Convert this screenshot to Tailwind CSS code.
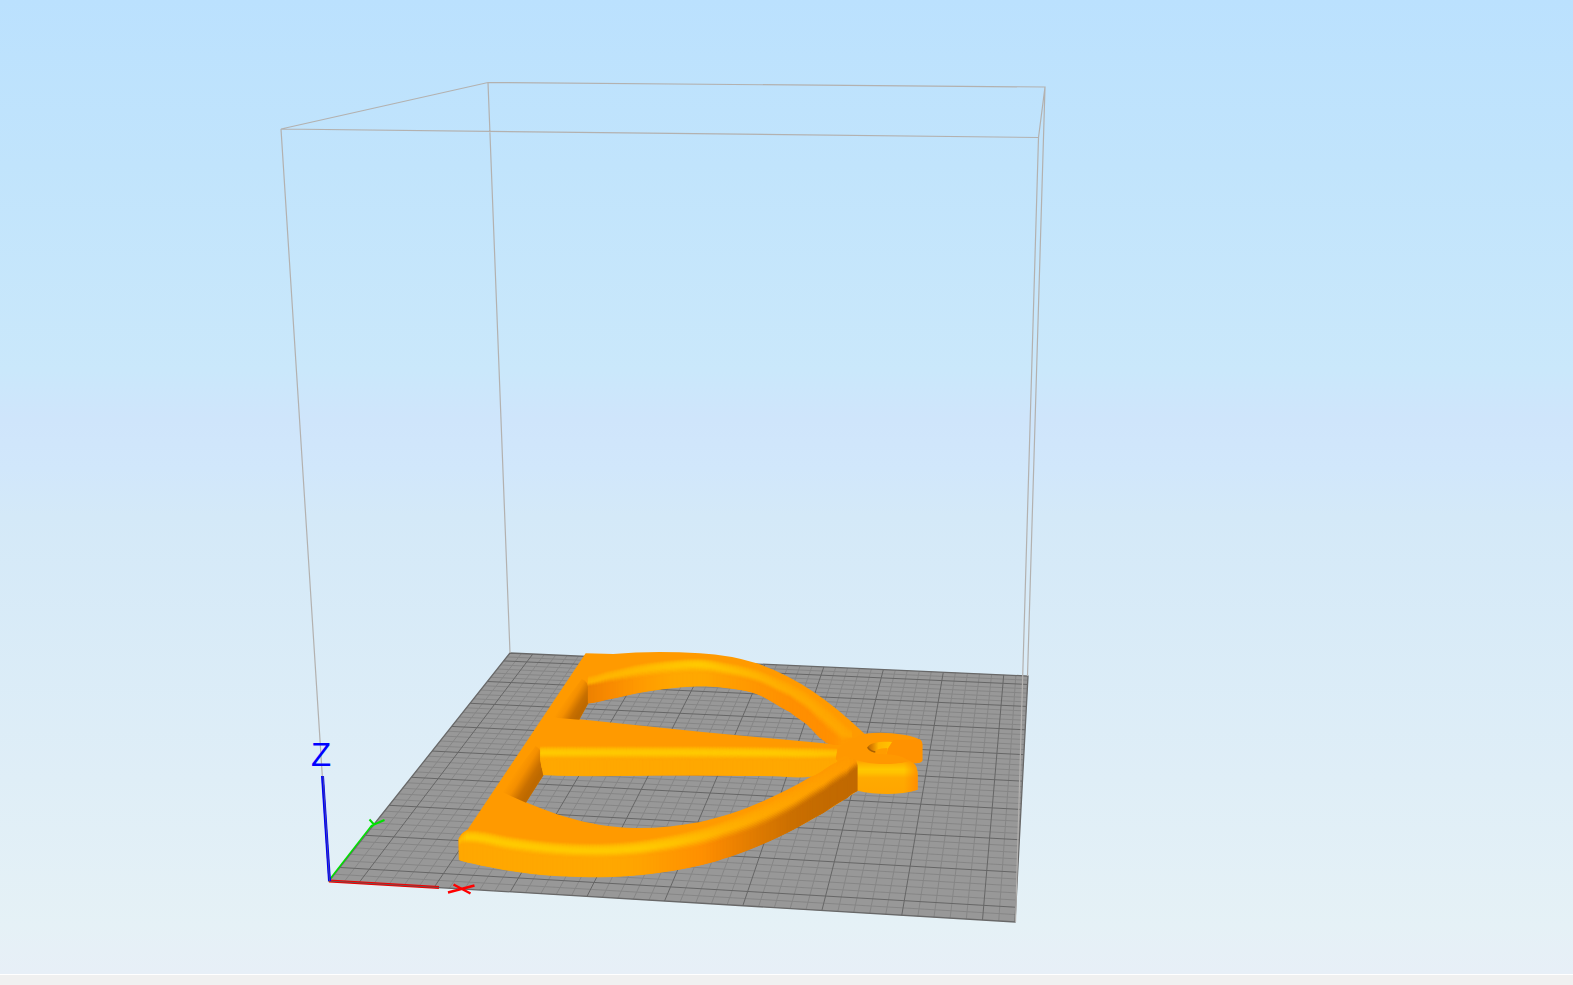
<!DOCTYPE html>
<html lang="en">
<head>
<meta charset="utf-8">
<meta name="viewport" content="width=device-width, initial-scale=1">
<title>Print bed preview</title>
<script src="https://cdn.jsdelivr.net/npm/@tailwindcss/browser@4"></script>
</head>
<body class="flex h-screen flex-col overflow-hidden bg-[#f0f0f0]">
<main class="min-h-0 flex-1 bg-[linear-gradient(to_bottom,#bbe1fe_0%,#c1e4fc_17%,#cae8fb_38%,#cfe5fb_43%,#d1e7fb_48%,#d4e9f8_53%,#dfeef7_80%,#e5f1f6_95%,#e7eff7_100%)]">
<svg class="block h-full w-full" viewBox="0 0 1573 974" role="img" aria-label="3D model on a print bed">
  <defs>
    <linearGradient id="wallA" gradientUnits="userSpaceOnUse" x1="383" y1="165" x2="432" y2="196">
      <stop offset="0" stop-color="#ff9a00"/><stop offset=".35" stop-color="#f48f00"/><stop offset=".75" stop-color="#c97000"/><stop offset="1" stop-color="#bd6900"/>
    </linearGradient>
    <linearGradient id="wallB" gradientUnits="userSpaceOnUse" x1="232" y1="385" x2="288" y2="420">
      <stop offset="0" stop-color="#ff9a00"/><stop offset=".35" stop-color="#f48f00"/><stop offset=".75" stop-color="#c97000"/><stop offset="1" stop-color="#bd6900"/>
    </linearGradient>
    <linearGradient id="jaw" gradientUnits="userSpaceOnUse" x1="0" y1="362" x2="0" y2="462">
      <stop offset="0" stop-color="#ffa000"/><stop offset=".12" stop-color="#ffb600"/><stop offset=".26" stop-color="#ffc800"/><stop offset=".36" stop-color="#ffc200"/><stop offset=".52" stop-color="#ffaa00"/><stop offset="1" stop-color="#ffa500"/>
    </linearGradient>
    <linearGradient id="jawShade" x1="0" y1="0" x2="1" y2="0">
      <stop offset=".78" stop-color="#ff8800" stop-opacity="0"/><stop offset="1" stop-color="#ff8800" stop-opacity=".8"/>
    </linearGradient>
    <linearGradient id="bore" x1="0" y1="0" x2="1" y2="0">
      <stop offset="0" stop-color="#b86800"/><stop offset=".2" stop-color="#dd8200"/><stop offset=".45" stop-color="#ffb400"/><stop offset="1" stop-color="#ffc400"/>
    </linearGradient>
  </defs>

  <!-- bed -->
  <path d="M329 881L1015 922L1028 676L510 653Z" fill="#989898"/>
  <g id="minor" stroke="#868686" stroke-width="1" fill="none"></g>
  <g id="major" stroke="#666666" stroke-width="1" fill="none"></g>
  <path d="M329 881L1015 922L1028 676L510 653Z" fill="none" stroke="#686868" stroke-width="1.3"/>

  <!-- build volume -->
  <path d="M281 129L488 82.500L1045 87L1038.500 137.500ZM488 82.500L510 653M1045 87L1027.500 676M281 129L329 881M1038.500 137.500L1015.500 922" fill="none" stroke="#b3b1af" stroke-width="1.200"/>

  <!-- axes -->
  <path d="M329 881L439 887.500" stroke="#f00000" stroke-width="3"/>
  <path d="M329 881L439 887.500" stroke="#705050" stroke-width="1"/>
  <path d="M330 879L372 825" stroke="#00e000" stroke-width="1.500"/>
  <path d="M369.500 819.500L374 824.500L384.500 820M374 824.500L371 827" stroke="#00e000" stroke-width="2" fill="none"/>
  <path d="M448 892.500L474.500 885.500M453.500 884.500L470.500 893.500" stroke="#f00" stroke-width="2.500"/>
  <path d="M322.500 776L329.500 881" stroke="#0000f5" stroke-width="3"/>
  <path d="M323 776L329.500 881" stroke="#4040b0" stroke-width="1"/>
  <text x="311" y="766" font-family="Liberation Sans, sans-serif" font-size="33" fill="#0000ff">Z</text>

  <!-- model -->
  <g transform="translate(440 640) scale(.333333)">
    <path fill="#ff9a00" fill-rule="evenodd" d="M437 40L520 42Q640 31 780 40Q870 45 950 70Q1110 122 1275 283L1290 350L1253 452C1080 570 940 632 780 675C520 735 260 710 57 660L55 600Q60 582 80 573Z
      M445 190L418 238L780 275L1175 312L1150 300C1080 220 1020 185 950 160C820 125 650 130 445 190Z
      M311 405L1115 409C1010 470 900 520 780 546C600 580 450 570 258 487Z"/>
    <path fill="url(#wallA)" d="M425 117Q445 123 445 150V190L418 239L355 234L340 230Z"/>
    <path fill="url(#wallB)" d="M287 318Q306 330 309 352L311 405L258 488L195 460L180 455Z"/>
    <g id="strips"></g>
    <!-- hinge head -->
    <path fill="url(#jaw)" d="M1247 355L1412 360Q1433 375 1433 405V449C1380 466 1310 465 1253 452V375Z"/>
    <path fill="url(#jawShade)" d="M1247 355L1412 360Q1433 375 1433 405V449C1380 466 1310 465 1253 452V375Z"/>
    <path fill="#ff9800" d="M1188 360Q1184 325 1225 304Q1245 290 1275 281Q1330 274 1390 284Q1447 293 1447 312V362Q1440 370 1425 370L1410 362C1370 376 1290 376 1243 358L1215 347Z"/>
    <path fill="#ff9200" d="M1340 327L1361 300L1440 298Q1447 304 1447 312V362Q1440 370 1425 370L1400 358Q1380 345 1340 343Z"/>
    <path fill="url(#bore)" d="M1282 322C1290 308 1320 304 1356 306L1343 327L1340 342C1315 343 1285 338 1282 322Z"/>
    <path fill="#ff9c00" d="M1303 340Q1303 325 1342 324L1340 344Z"/>
    <path fill="none" stroke="#a96000" stroke-width="4" d="M1283 322Q1290 333 1306 336"/>
  </g>
</svg>
</main>
<footer class="h-[11px] shrink-0 border-t border-white bg-[#f0f0f0]"></footer>
<script>
const NS = 'http://www.w3.org/2000/svg';
function add(id, tag, attrs) {
  const e = document.createElementNS(NS, tag);
  for (const k in attrs) e.setAttribute(k, attrs[k]);
  document.getElementById(id).appendChild(e);
}

// Projective map from the unit square to the four bed corners
const [p0, p1, p2, p3] = [[329, 881], [1015, 922], [1028, 676], [510, 653]];
const sx = p0[0] - p1[0] + p2[0] - p3[0], sy = p0[1] - p1[1] + p2[1] - p3[1];
const ax = p1[0] - p2[0], ay = p1[1] - p2[1], bx = p3[0] - p2[0], by = p3[1] - p2[1];
const det = ax * by - bx * ay, g = (sx * by - bx * sy) / det, h = (ax * sy - sx * ay) / det;
function bed(u, v) {
  const w = g * u + h * v + 1;
  return [
    ((p1[0] - p0[0] + g * p1[0]) * u + (p3[0] - p0[0] + h * p3[0]) * v + p0[0]) / w,
    ((p1[1] - p0[1] + g * p1[1]) * u + (p3[1] - p0[1] + h * p3[1]) * v + p0[1]) / w
  ];
}
// 220 mm bed, 5 mm cells, heavy line every 25 mm
for (let i = 1; i < 44; i++) {
  const t = i / 44, layer = i % 5 === 2 ? 'major' : 'minor';
  add(layer, 'path', { d: 'M' + bed(t, 0) + 'L' + bed(t, 1) });
  add(layer, 'path', { d: 'M' + bed(0, t) + 'L' + bed(1, t) });
}

// Rounded strips. Station: x, bevel top, highlight, bevel foot, base, highlight colour, wall colour
const TOP = [255, 154, 0];
const mix = (a, b, t) => a.map((v, i) => v + (b[i] - v) * t);
const ease = t => t * t * (3 - 2 * t);
const spline = (a, b, c, d, t) => .5 * (2 * b + (c - a) * t + (2 * a - 5 * b + 4 * c - d) * t * t + (3 * b - a - 3 * c + d) * t * t * t);
function strip(s) {
  const stations = [];
  for (let i = 0; i < s.length - 1; i++) {
    const a = s[Math.max(i - 1, 0)], b = s[i], c = s[i + 1], d = s[Math.min(i + 2, s.length - 1)];
    const n = Math.max(2, Math.round((c[0] - b[0]) / 10));
    for (let k = 0; k < n + (i === s.length - 2 ? 1 : 0); k++) {
      const t = k / n;
      const y = [1, 2, 3, 4].map(j => spline(a[j], b[j], c[j], d[j], t));
      stations.push({ x: b[0] + (c[0] - b[0]) * t, y, hi: mix(b[5], c[5], t), wall: mix(b[6], c[6], t) });
    }
  }
  for (let i = 0; i < stations.length - 1; i++) {
    const p = stations[i], q = stations[i + 1];
    for (let band = 0; band < 3; band++) {
      const n = band === 2 ? 1 : 7;
      for (let k = 0; k < n; k++) {
        const t0 = k / n, t1 = (k + 1) / n;
        const at = (o, t) => (o.y[band] + (o.y[band + 1] - o.y[band]) * t).toFixed(1);
        const m = (t0 + t1) / 2;
        const col = band === 0 ? mix(TOP, p.hi, 1 - (1 - m) ** 2) : band === 1 ? mix(p.hi, p.wall, ease(m)) : p.wall;
        const c = 'rgb(' + col.map(Math.round) + ')';
        add('strips', 'path', {
          d: `M${p.x} ${at(p, t0)}L${q.x} ${at(q, t0)}L${q.x} ${at(q, t1)}L${p.x} ${at(p, t1)}Z`,
          fill: c, stroke: c, 'stroke-width': 3, 'stroke-linejoin': 'round'
        });
      }
    }
  }
}
const Y = [255, 202, 0], W = [255, 168, 0];
// far arm
strip([
  [445, 108, 128, 142, 189, [255, 178, 0], [238, 130, 0]],
  [500, 94, 112, 133, 178, [255, 182, 0], [248, 138, 0]],
  [600, 72, 92, 118, 157, [255, 188, 0], [255, 155, 0]],
  [700, 60, 79, 105, 143, [255, 197, 0], W],
  [780, 56, 76, 100, 138, Y, W],
  [850, 66, 88, 110, 142, [255, 193, 0], [255, 160, 0]],
  [950, 88, 112, 132, 161, [255, 180, 0], [255, 150, 0]],
  [1050, 127, 157, 178, 215, [255, 172, 0], [255, 144, 0]],
  [1100, 155, 189, 215, 252, [255, 170, 0], [255, 143, 0]],
  [1150, 192, 230, 262, 300, [255, 168, 0], [255, 143, 0]],
  [1175, 213, 252, 285, 312, [255, 168, 0], [255, 145, 0]],
  [1205, 242, 278, 305, 312, [255, 168, 0], [255, 154, 0]],
  [1235, 268, 290, 298, 302, [255, 164, 0], [255, 154, 0]]
]);
// centre bar
strip([
  [302, 319, 340, 360, 362, Y, W],
  [311, 319, 340, 360, 404, Y, W],
  [780, 319, 340, 361, 404, Y, W],
  [1000, 321, 341, 362, 407, Y, W],
  [1115, 323, 343, 362, 408, [255, 198, 0], W],
  [1190, 326, 342, 360, 366, [255, 192, 0], W]
]);
// near arm
strip([
  [58, 594, 604, 620, 659, [255, 185, 0], W],
  [66, 582, 598, 616, 662, [255, 190, 0], W],
  [80, 572, 594, 615, 666, Y, W],
  [120, 573, 597, 619, 675, Y, W],
  [200, 588, 612, 636, 690, Y, W],
  [300, 602, 625, 649, 703, Y, W],
  [400, 609, 633, 656, 709, Y, W],
  [500, 609, 634, 657, 710, Y, W],
  [600, 601, 627, 651, 704, Y, [255, 163, 0]],
  [700, 584, 612, 638, 691, [255, 195, 0], [255, 152, 0]],
  [780, 565, 594, 624, 675, [255, 186, 0], [255, 144, 0]],
  [850, 542, 572, 603, 655, [255, 178, 0], [243, 134, 0]],
  [950, 502, 536, 570, 619, [255, 170, 0], [222, 122, 0]],
  [1050, 452, 488, 522, 573, [255, 164, 0], [203, 111, 0]],
  [1150, 394, 428, 462, 518, [255, 160, 0], [195, 106, 0]],
  [1220, 355, 383, 416, 474, [255, 156, 0], [193, 105, 0]],
  [1252, 345, 362, 388, 452, [250, 150, 0], [193, 105, 0]]
]);
</script>
</body>
</html>
